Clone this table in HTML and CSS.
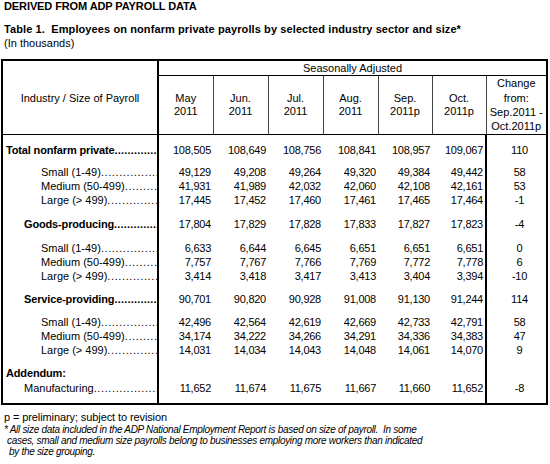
FILE: index.html
```html
<!DOCTYPE html>
<html lang="en">
<head>
    <meta charset="UTF-8">
    <title>Table 1 - ADP Payroll Data</title>
    <link rel="stylesheet" href="styles.css">
</head>
<body>
    <div class="source">DERIVED FROM ADP PAYROLL DATA</div>
    <div class="caption">Table 1.&nbsp; Employees on nonfarm private payrolls by selected industry sector and size*</div>
    <div class="units">(In thousands)</div>

    <table class="payroll">
        <colgroup>
            <col class="c-label">
            <col class="c-num"><col class="c-num"><col class="c-num"><col class="c-num">
            <col class="c-num2"><col class="c-num2">
            <col class="c-chg">
        </colgroup>
        <thead>
            <tr>
                <th class="h-label" rowspan="2">Industry / Size of Payroll</th>
                <th class="h-span" colspan="7">Seasonally Adjusted</th>
            </tr>
            <tr class="h-months">
                <th>May<br>2011</th>
                <th>Jun.<br>2011</th>
                <th>Jul.<br>2011</th>
                <th>Aug.<br>2011</th>
                <th>Sep.<br>2011p</th>
                <th>Oct.<br>2011p</th>
                <th class="h-chg">Change<br>from:<br>Sep.2011 -<br>Oct.2011p</th>
            </tr>
        </thead>
        <tbody>
            <tr class="grp first">
                <td><div class="lead bold"><span>Total nonfarm private</span><span class="dots"></span></div></td>
                <td>108,505</td><td>108,649</td><td>108,756</td><td>108,841</td><td>108,957</td><td>109,067</td><td class="chg">110</td>
            </tr>
            <tr class="gap-s">
                <td><div class="lead sub"><span>Small (1-49)</span><span class="dots"></span></div></td>
                <td>49,129</td><td>49,208</td><td>49,264</td><td>49,320</td><td>49,384</td><td>49,442</td><td class="chg">58</td>
            </tr>
            <tr>
                <td><div class="lead sub"><span>Medium (50-499)</span><span class="dots"></span></div></td>
                <td>41,931</td><td>41,989</td><td>42,032</td><td>42,060</td><td>42,108</td><td>42,161</td><td class="chg">53</td>
            </tr>
            <tr>
                <td><div class="lead sub"><span>Large (&gt; 499)</span><span class="dots"></span></div></td>
                <td>17,445</td><td>17,452</td><td>17,460</td><td>17,461</td><td>17,465</td><td>17,464</td><td class="chg">-1</td>
            </tr>

            <tr class="gap-l">
                <td><div class="lead bold ind"><span>Goods-producing</span><span class="dots"></span></div></td>
                <td>17,804</td><td>17,829</td><td>17,828</td><td>17,833</td><td>17,827</td><td>17,823</td><td class="chg">-4</td>
            </tr>
            <tr class="gap-l">
                <td><div class="lead sub"><span>Small (1-49)</span><span class="dots"></span></div></td>
                <td>6,633</td><td>6,644</td><td>6,645</td><td>6,651</td><td>6,651</td><td>6,651</td><td class="chg">0</td>
            </tr>
            <tr>
                <td><div class="lead sub"><span>Medium (50-499)</span><span class="dots"></span></div></td>
                <td>7,757</td><td>7,767</td><td>7,766</td><td>7,769</td><td>7,772</td><td>7,778</td><td class="chg">6</td>
            </tr>
            <tr>
                <td><div class="lead sub"><span>Large (&gt; 499)</span><span class="dots"></span></div></td>
                <td>3,414</td><td>3,418</td><td>3,417</td><td>3,413</td><td>3,404</td><td>3,394</td><td class="chg">-10</td>
            </tr>

            <tr class="gap-m">
                <td><div class="lead bold ind"><span>Service-providing</span><span class="dots"></span></div></td>
                <td>90,701</td><td>90,820</td><td>90,928</td><td>91,008</td><td>91,130</td><td>91,244</td><td class="chg">114</td>
            </tr>
            <tr class="gap-m">
                <td><div class="lead sub"><span>Small (1-49)</span><span class="dots"></span></div></td>
                <td>42,496</td><td>42,564</td><td>42,619</td><td>42,669</td><td>42,733</td><td>42,791</td><td class="chg">58</td>
            </tr>
            <tr>
                <td><div class="lead sub"><span>Medium (50-499)</span><span class="dots"></span></div></td>
                <td>34,174</td><td>34,222</td><td>34,266</td><td>34,291</td><td>34,336</td><td>34,383</td><td class="chg">47</td>
            </tr>
            <tr>
                <td><div class="lead sub"><span>Large (&gt; 499)</span><span class="dots"></span></div></td>
                <td>14,031</td><td>14,034</td><td>14,043</td><td>14,048</td><td>14,061</td><td>14,070</td><td class="chg">9</td>
            </tr>

            <tr class="gap-m">
                <td><div class="lead bold"><span>Addendum:</span></div></td>
                <td></td><td></td><td></td><td></td><td></td><td></td><td class="chg"></td>
            </tr>
            <tr class="last">
                <td><div class="lead ind"><span>Manufacturing</span><span class="dots"></span></div></td>
                <td>11,652</td><td>11,674</td><td>11,675</td><td>11,667</td><td>11,660</td><td>11,652</td><td class="chg">-8</td>
            </tr>
        </tbody>
    </table>

    <div class="note">p = preliminary; subject to revision</div>
    <div class="footnote">
        <div>* All size data included in the ADP National Employment Report is based on size of payroll.&nbsp; In some</div>
        <div class="fn-2">cases, small and medium size payrolls belong to businesses employing more workers than indicated</div>
        <div class="fn-3">by the size grouping.</div>
    </div>
</body>
</html>
```

FILE: styles.css
```css
/* page */
body {
    margin: 0;
    padding: 0 0 0 4px;
    background: #fff;
    color: #000;
    font-family: "Liberation Sans", Arial, sans-serif;
    font-size: 11px;
}

/* titles */
.source {
    font-weight: bold;
    line-height: 13px;
    letter-spacing: -0.1px;
}
.caption {
    margin-top: 9px;
    font-weight: bold;
    line-height: 14px;
    letter-spacing: 0.1px;
}
.units {
    line-height: 14px;
}

/* table */
.payroll {
    margin: 9px 0 0 -3px;
    width: 547px;
    border-collapse: collapse;
    table-layout: fixed;
    border: 2px solid #000;
    line-height: 14px;
}
.c-label { width: 156px; }
.c-num { width: 55px; }
.c-num2 { width: 54px; }
.c-chg { width: 61px; }

.payroll th {
    font-weight: normal;
    padding: 0;
    text-align: center;
    vertical-align: middle;
}
.h-label {
    border-right: 2px solid #000;
    border-bottom: 1px solid #000;
}
.h-span {
    height: 13px;
    border-bottom: 1px solid #000;
}
.h-months th {
    height: 58px;
    line-height: 13px;
    border-left: 1px solid #444;
    border-bottom: 1px solid #000;
}
.h-months th:first-child {
    border-left: none;
}
.h-months .h-chg {
    line-height: 14.3px;
}

.payroll td {
    padding: 0 2px 0 0;
    text-align: right;
    white-space: nowrap;
    letter-spacing: -0.25px;
}
.payroll td:first-child {
    padding: 0;
    text-align: left;
    letter-spacing: 0;
    border-right: 2px solid #000;
}
.payroll td.chg {
    padding: 0 0 0 6px;
    text-align: center;
    border-left: 2px solid #000;
}

/* row spacing */
.payroll tr.first td { padding-top: 8px; }
.payroll tr.gap-s td { padding-top: 8px; }
.payroll tr.gap-l td { padding-top: 10px; }
.payroll tr.gap-m td { padding-top: 9px; }
.payroll tr.last td { padding-top: 1px; padding-bottom: 8px; }

/* labels with dot leaders */
.lead {
    display: flex;
    white-space: nowrap;
    overflow: hidden;
    padding-left: 3px;
}
.lead.bold { font-weight: bold; letter-spacing: -0.15px; }
.lead.ind { padding-left: 21px; }
.lead.sub { padding-left: 38px; }
.dots {
    flex: 1;
    overflow: hidden;
    letter-spacing: 0.6px;
}
.dots::after {
    content: "..................................................................";
}
.lead.bold .dots { letter-spacing: 0.2px; }

/* notes */
.note {
    margin-top: 5px;
    line-height: 14px;
    letter-spacing: -0.1px;
}
.footnote {
    font-size: 10px;
    font-style: italic;
    line-height: 11px;
    letter-spacing: -0.3px;
}
.fn-2 { padding-left: 3px; }
.fn-3 { padding-left: 5px; }
```
